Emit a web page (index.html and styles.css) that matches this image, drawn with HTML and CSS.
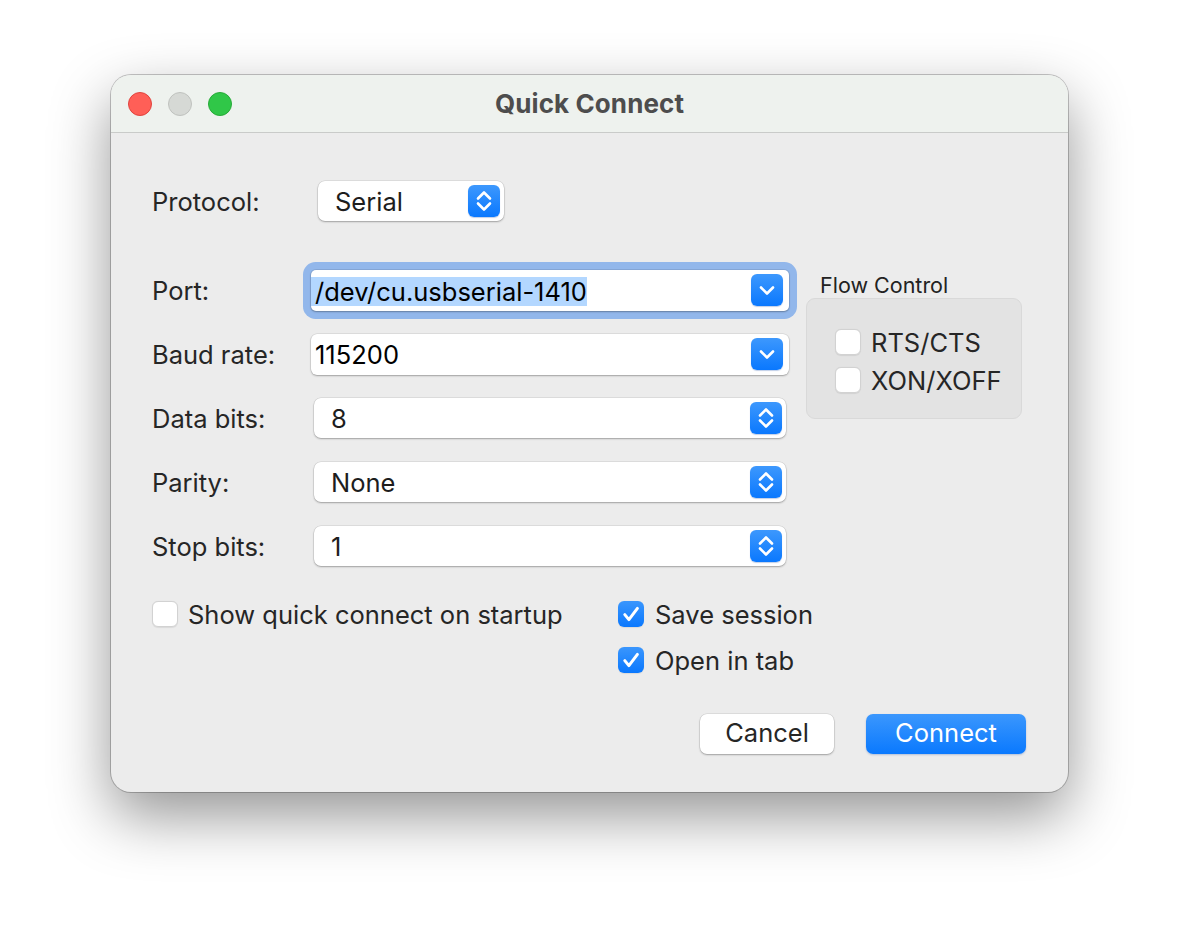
FILE: index.html
```html
<!DOCTYPE html>
<html>
<head>
<meta charset="utf-8">
<link rel="stylesheet" href="styles.css">
</head>
<body>
<div class="window">
  <div class="titlebar">
    <div class="lights">
      <span class="light red"></span>
      <span class="light gray"></span>
      <span class="light green"></span>
    </div>
    <div class="title">Quick Connect</div>
    <div></div>
  </div>
  <div class="content">
    <div class="protocol-row">
      <div class="label proto-label">Protocol:</div>
      <div class="popup proto-popup">
        <span class="value">Serial</span>
        <span class="stepper"><svg viewBox="0 0 32 32" width="32" height="32"><path d="M10 13.5 L16 7.5 L22 13.5 M10 18.5 L16 24.5 L22 18.5" fill="none" stroke="#fff" stroke-width="2.6" stroke-linecap="round" stroke-linejoin="round"/></svg></span>
      </div>
    </div>

    <div class="main">
      <div class="fields">
        <div class="row">
          <div class="label">Port:</div>
          <div class="combo focused">
            <span class="selection">/dev/cu.usbserial-1410</span>
            <span class="dropbtn"><svg viewBox="0 0 32 32" width="32" height="32"><path d="M10 13.5 L16 19.5 L22 13.5" fill="none" stroke="#fff" stroke-width="2.6" stroke-linecap="round" stroke-linejoin="round"/></svg></span>
          </div>
        </div>
        <div class="row">
          <div class="label">Baud rate:</div>
          <div class="combo">
            <span class="combo-text">115200</span>
            <span class="dropbtn"><svg viewBox="0 0 32 32" width="32" height="32"><path d="M10 13.5 L16 19.5 L22 13.5" fill="none" stroke="#fff" stroke-width="2.6" stroke-linecap="round" stroke-linejoin="round"/></svg></span>
          </div>
        </div>
        <div class="row">
          <div class="label">Data bits:</div>
          <div class="popup wide">
            <span class="value">8</span>
            <span class="stepper"><svg viewBox="0 0 32 32" width="32" height="32"><path d="M10 13.5 L16 7.5 L22 13.5 M10 18.5 L16 24.5 L22 18.5" fill="none" stroke="#fff" stroke-width="2.6" stroke-linecap="round" stroke-linejoin="round"/></svg></span>
          </div>
        </div>
        <div class="row">
          <div class="label">Parity:</div>
          <div class="popup wide">
            <span class="value">None</span>
            <span class="stepper"><svg viewBox="0 0 32 32" width="32" height="32"><path d="M10 13.5 L16 7.5 L22 13.5 M10 18.5 L16 24.5 L22 18.5" fill="none" stroke="#fff" stroke-width="2.6" stroke-linecap="round" stroke-linejoin="round"/></svg></span>
          </div>
        </div>
        <div class="row">
          <div class="label">Stop bits:</div>
          <div class="popup wide">
            <span class="value">1</span>
            <span class="stepper"><svg viewBox="0 0 32 32" width="32" height="32"><path d="M10 13.5 L16 7.5 L22 13.5 M10 18.5 L16 24.5 L22 18.5" fill="none" stroke="#fff" stroke-width="2.6" stroke-linecap="round" stroke-linejoin="round"/></svg></span>
          </div>
        </div>
      </div>

      <div class="flow">
        <div class="flow-label">Flow Control</div>
        <div class="flow-box">
          <label class="check"><span class="box"></span><span class="check-text">RTS/CTS</span></label>
          <label class="check"><span class="box"></span><span class="check-text">XON/XOFF</span></label>
        </div>
      </div>
    </div>

    <div class="options">
      <div class="opt-left">
        <label class="check"><span class="box"></span><span class="check-text">Show quick connect on startup</span></label>
      </div>
      <div class="opt-right">
        <label class="check"><span class="box checked"><svg viewBox="0 0 26 26" width="26" height="26"><path d="M6.8 13.6 L10.9 18.6 L19.4 7.4" fill="none" stroke="#fff" stroke-width="3" stroke-linecap="round" stroke-linejoin="round"/></svg></span><span class="check-text">Save session</span></label>
        <label class="check"><span class="box checked"><svg viewBox="0 0 26 26" width="26" height="26"><path d="M6.8 13.6 L10.9 18.6 L19.4 7.4" fill="none" stroke="#fff" stroke-width="3" stroke-linecap="round" stroke-linejoin="round"/></svg></span><span class="check-text">Open in tab</span></label>
      </div>
    </div>

    <div class="buttons">
      <button class="btn cancel">Cancel</button>
      <button class="btn connect">Connect</button>
    </div>
  </div>
</div>
</body>
</html>
```
FILE: styles.css
```css
html, body {
  margin: 0;
  padding: 0;
  background: #ffffff;
}
body {
  font-family: Inter, "Noto Sans", "Liberation Sans", sans-serif;
  color: #262626;
  min-height: 940px;
  padding-top: 75px;
  box-sizing: border-box;
}
.window {
  margin: 0 0 0 111px;
  width: 957px;
  height: 717px;
  box-sizing: border-box;
  border-radius: 20px;
  background: #ececec;
  box-shadow: 0 0 0 1px rgba(0,0,0,0.22), 0 24px 60px rgba(0,0,0,0.42);
  overflow: hidden;
}
.titlebar {
  height: 57px;
  background: #eef2ee;
  border-bottom: 1px solid #c9cbc9;
  display: grid;
  grid-template-columns: 1fr auto 1fr;
  align-items: center;
}
.lights {
  display: flex;
  gap: 16px;
  padding-left: 17px;
}
.light {
  width: 24px;
  height: 24px;
  border-radius: 50%;
  box-sizing: border-box;
}
.red { background: #ff5f57; border: 1px solid #e0443e; }
.gray { background: #d6d9d5; border: 1px solid #bfc2be; }
.green { background: #30c748; border: 1px solid #27aa38; }
.title {
  font-size: 26px;
  font-weight: 700;
  color: #4d4d4d;
  letter-spacing: 0.1px;
  margin-top: -1px;
}
.content {
  padding: 48px 42px 0 41px;
}
.label {
  font-size: 25.5px;
  color: #262626;
  width: 159px;
  flex: none;
}
.protocol-row {
  display: flex;
  align-items: center;
  height: 40px;
}
.proto-label { width: 166px; }
.popup {
  position: relative;
  height: 40px;
  background: #fff;
  border-radius: 7px;
  box-shadow: 0 0 0 0.5px rgba(0,0,0,0.12), 0 1px 2px rgba(0,0,0,0.28);
  display: flex;
  align-items: center;
  box-sizing: border-box;
  padding-left: 17px;
}
.proto-popup { width: 186px; }
.popup.wide { width: 472px; margin-left: 3px; }
.value {
  font-size: 25.5px;
  color: #1d1d1d;
  flex: 1;
}
.stepper, .dropbtn {
  width: 32px;
  height: 32px;
  border-radius: 6px;
  background: linear-gradient(#3d98fd, #0a78fe);
  box-shadow: 0 1px 1px rgba(0,60,160,0.25);
  display: flex;
  flex: none;
}
.stepper { margin-right: 4px; }
.main {
  display: flex;
  margin-top: 49px;
  gap: 17px;
}
.fields {
  display: flex;
  flex-direction: column;
  gap: 24px;
  width: 637px;
}
.row {
  display: flex;
  align-items: center;
  height: 40px;
}
.combo {
  width: 478px;
  height: 41px;
  background: #fff;
  border-radius: 6px;
  box-shadow: 0 0 0 0.5px rgba(0,0,0,0.12), 0 1px 2px rgba(0,0,0,0.28);
  display: flex;
  align-items: center;
  box-sizing: border-box;
  padding-right: 6px;
}
.combo.focused {
  box-shadow: 0 0 0 1px rgba(0,0,0,0.08), 0 1px 2px rgba(0,0,0,0.25), 0 0 0 8px #92b7eb;
  border-radius: 5px;
}
.combo .dropbtn { margin-left: auto; }
.selection {
  background: #b3d7ff;
  color: #000;
  font-size: 25.5px;
  padding: 0 0 0 4px;
  line-height: 29px;
  margin-top: 2px;
}
.combo-text {
  font-size: 25.5px;
  color: #000;
  padding-left: 4px;
}
.flow {
  width: 217px;
  margin-top: 3px;
}
.flow-label {
  font-size: 21.5px;
  color: #222;
  line-height: 24px;
  padding-left: 14px;
}
.flow-box {
  margin-top: 1px;
  height: 121px;
  width: 216px;
  box-sizing: border-box;
  background: #e3e3e3;
  border: 1px solid #d9d9d9;
  border-radius: 9px;
  padding: 30px 0 0 28px;
  display: flex;
  flex-direction: column;
  gap: 12px;
}
.check {
  display: flex;
  align-items: center;
  gap: 10px;
  height: 26px;
}
.box {
  width: 26px;
  height: 26px;
  box-sizing: border-box;
  border-radius: 6px;
  background: #fff;
  border: 1px solid #d2d2d2;
  box-shadow: 0 0.5px 1px rgba(0,0,0,0.08);
  flex: none;
  display: flex;
}
.box.checked {
  border: none;
  background: linear-gradient(#3a96fd, #0a78fe);
}
.check-text {
  font-size: 25.5px;
  color: #262626;
}
.options {
  display: flex;
  margin-top: 35px;
}
.opt-left { width: 466px; }
.opt-right {
  display: flex;
  flex-direction: column;
  gap: 20px;
}
.opt-right .check { gap: 11px; }
.buttons {
  display: flex;
  justify-content: flex-end;
  gap: 32px;
  margin-top: 41px;
}
.btn {
  height: 40px;
  border: none;
  border-radius: 7px;
  font-family: Inter, "Noto Sans", "Liberation Sans", sans-serif;
  font-size: 25.5px;
  padding: 0 0 3px 0;
}
.cancel {
  width: 134px;
  background: #fff;
  color: #262626;
  box-shadow: 0 0 0 0.5px rgba(0,0,0,0.12), 0 1px 2px rgba(0,0,0,0.28);
}
.connect {
  width: 160px;
  color: #fff;
  background: linear-gradient(#3b97fd, #0a79fe);
  box-shadow: 0 1px 2px rgba(0,60,160,0.25);
}
```
